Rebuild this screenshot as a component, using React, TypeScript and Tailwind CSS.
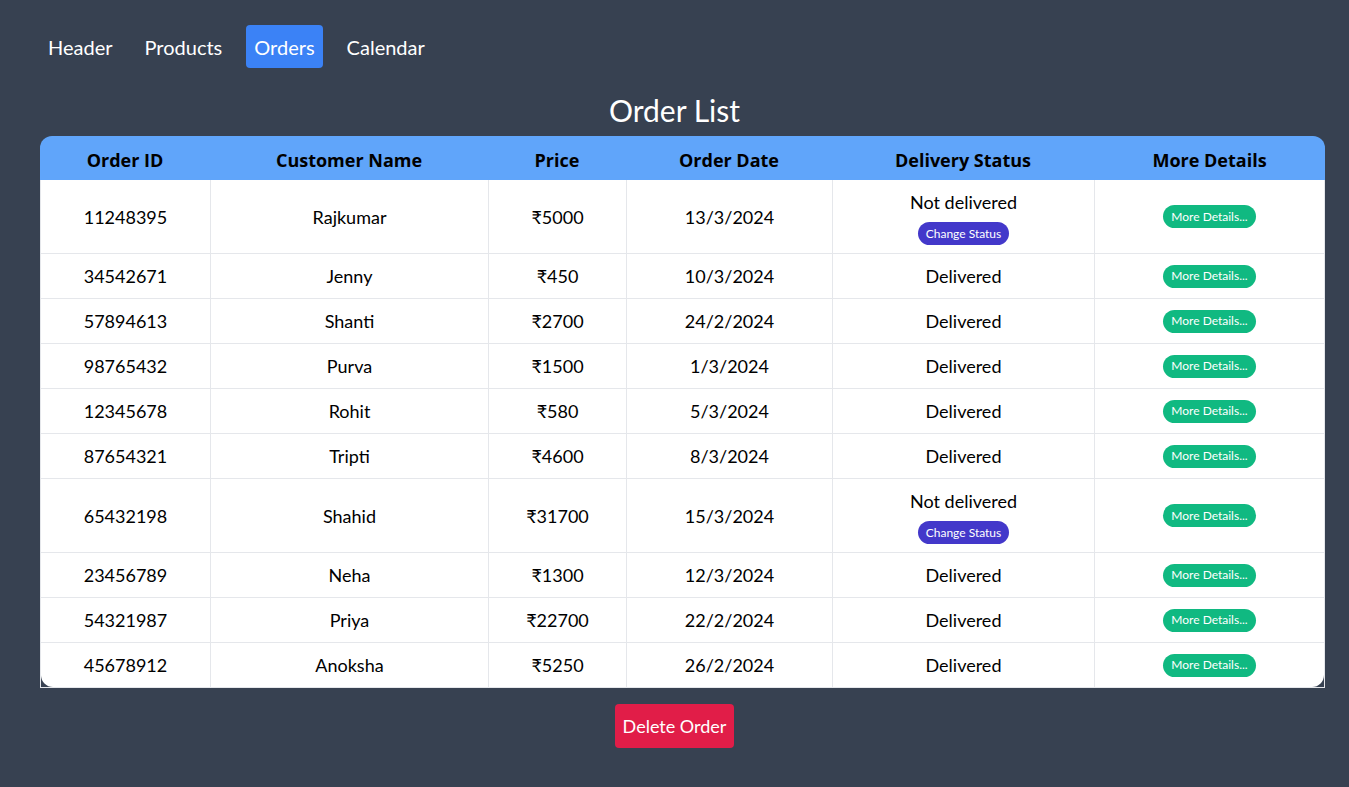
const orders = [
  { id: "11248395", name: "Rajkumar", price: "₹5000", date: "13/3/2024", delivered: false },
  { id: "34542671", name: "Jenny", price: "₹450", date: "10/3/2024", delivered: true },
  { id: "57894613", name: "Shanti", price: "₹2700", date: "24/2/2024", delivered: true },
  { id: "98765432", name: "Purva", price: "₹1500", date: "1/3/2024", delivered: true },
  { id: "12345678", name: "Rohit", price: "₹580", date: "5/3/2024", delivered: true },
  { id: "87654321", name: "Tripti", price: "₹4600", date: "8/3/2024", delivered: true },
  { id: "65432198", name: "Shahid", price: "₹31700", date: "15/3/2024", delivered: false },
  { id: "23456789", name: "Neha", price: "₹1300", date: "12/3/2024", delivered: true },
  { id: "54321987", name: "Priya", price: "₹22700", date: "22/2/2024", delivered: true },
  { id: "45678912", name: "Anoksha", price: "₹5250", date: "26/2/2024", delivered: true },
];

const navItems = ["Header", "Products", "Orders", "Calendar"];

const App = () => {
  return (
    <div className="min-h-screen bg-[#374151] font-['Lato',sans-serif] pt-[25px] pb-10">
      {/* Top navigation */}
      <nav className="flex gap-4 px-10">
        {navItems.map((item) => (
          <a
            key={item}
            href="#"
            className={
              item === "Orders"
                ? "px-2 py-[7.5px] text-xl leading-7 text-white bg-[#3b82f6] rounded"
                : "px-2 py-[7.5px] text-xl leading-7 text-white"
            }
          >
            {item}
          </a>
        ))}
      </nav>

      <h1 className="mt-6 mb-2 text-center text-3xl text-white">Order List</h1>

      <div className="pl-10 pr-6">
        {/* Table head */}
        <div className="grid grid-cols-[170px_278px_138px_206px_262px_1fr] bg-[#60a5fa] rounded-t-xl text-lg leading-7 font-['Open_Sans',sans-serif] font-bold text-black">
          <div className="pt-[10px] pb-[6px] text-center">Order ID</div>
          <div className="pt-[10px] pb-[6px] text-center">Customer Name</div>
          <div className="pt-[10px] pb-[6px] text-center">Price</div>
          <div className="pt-[10px] pb-[6px] text-center">Order Date</div>
          <div className="pt-[10px] pb-[6px] text-center">Delivery Status</div>
          <div className="pt-[10px] pb-[6px] text-center">More Details</div>
        </div>

        {/* Table body */}
        <div className="border-x border-b border-[#e5e7eb]">
          <div className="bg-white rounded-b-xl overflow-hidden text-lg text-black">
            {orders.map((o, i) => (
              <div
                key={o.id}
                className={
                  i === orders.length - 1
                    ? "grid grid-cols-[169px_278px_138px_206px_262px_1fr]"
                    : "grid grid-cols-[169px_278px_138px_206px_262px_1fr] border-b border-[#e5e7eb]"
                }
              >
                <div className="flex items-center justify-center py-2">{o.id}</div>
                <div className="flex items-center justify-center py-2 border-l border-[#e5e7eb]">{o.name}</div>
                <div className="flex items-center justify-center py-2 border-l border-[#e5e7eb]">{o.price}</div>
                <div className="flex items-center justify-center py-2 border-l border-[#e5e7eb]">{o.date}</div>
                <div className="flex flex-col items-center justify-center py-2 border-l border-[#e5e7eb]">
                  {o.delivered ? (
                    <span className="leading-7">Delivered</span>
                  ) : (
                    <>
                      <span className="leading-7">Not delivered</span>
                      <button className="mt-[6px] h-[23px] px-2 text-xs leading-4 text-white bg-[#4338ca] rounded-full">
                        Change Status
                      </button>
                    </>
                  )}
                </div>
                <div className="flex items-center justify-center py-2 border-l border-[#e5e7eb]">
                  <button className="h-[23px] px-2 text-xs leading-4 text-white bg-[#10b981] rounded-full">
                    More Details...
                  </button>
                </div>
              </div>
            ))}
          </div>
        </div>
      </div>

      <div className="flex justify-center mt-4">
        <button className="px-2 py-2 text-lg leading-7 text-white bg-[#e11d48] rounded">Delete Order</button>
      </div>
    </div>
  );
};

export default App;
